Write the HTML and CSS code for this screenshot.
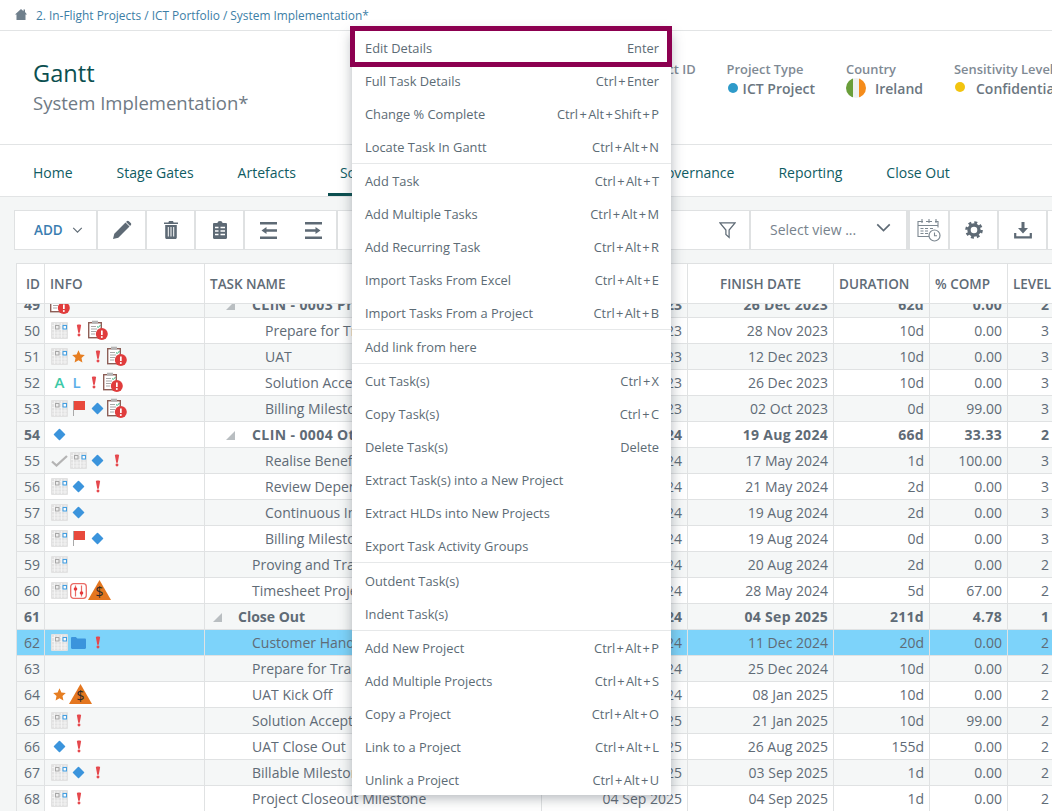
FILE: index.html
```html
<!DOCTYPE html>
<html lang="en">
<head>
<meta charset="utf-8">
<title>Gantt - System Implementation</title>
<link rel="stylesheet" href="styles.css">
</head>
<body>
<svg class="defs" width="0" height="0" aria-hidden="true">
  <symbol id="i-grid" viewBox="0 0 17 17">
    <rect width="17" height="17" rx="1" fill="#e2e2e2"/>
    <path d="M3.5 1v15M7 1v15M10.500 1v15M14 1v15M1 3.500h15M1 7.500h15M1 11h15M1 14h15" stroke="#f6f6f6" stroke-width=".8"/>
    <rect x="4.500" y="3.500" width="3.500" height="3.500" fill="#eee" stroke="#a6a6a6" stroke-width="1"/>
    <rect x="12" y="3.500" width="3.500" height="3.500" fill="#fff" stroke="#459fe0" stroke-width="1.100"/>
  </symbol>
  <symbol id="i-bang" viewBox="0 0 7 15">
    <path d="M1 1.200C1 .4 6 .4 6 1.200L4.400 10H2.600Z" fill="#e5484d"/>
    <circle cx="3.500" cy="12.800" r="1.700" fill="#e5484d"/>
  </symbol>
  <symbol id="i-star" viewBox="0 0 13 13">
    <path d="M6.500 .3l1.900 4.200 4.400.5-3.300 3 .9 4.500-3.900-2.300-3.900 2.300.9-4.500-3.300-3 4.400-.5z" fill="#e67e22"/>
  </symbol>
  <symbol id="i-flag" viewBox="0 0 12 15">
    <rect x="0" y="0" width="1" height="15" fill="#a9a9a9"/>
    <rect x="1" y="0" width="11" height="9" fill="#e8493c"/>
  </symbol>
  <symbol id="i-diamond" viewBox="0 0 13 13">
    <rect x="2.200" y="2.200" width="8.600" height="8.600" rx=".8" fill="#3b94dc" transform="rotate(45 6.500 6.500)"/>
  </symbol>
  <symbol id="i-folder" viewBox="0 0 15 12">
    <path d="M0 1.200C0 .5.500 0 1.200 0h3.600l1.600 1.600h7.400c.7 0 1.200.5 1.200 1.200v8c0 .7-.5 1.200-1.200 1.200H1.200C.5 12 0 11.500 0 10.800z" fill="#3b94dc"/>
  </symbol>
  <symbol id="i-check" viewBox="0 0 17 12">
    <path d="M1 6.500l4.500 4L16 1" fill="none" stroke="#b4b4b4" stroke-width="2.300"/>
  </symbol>
  <symbol id="i-slider" viewBox="0 0 17 16">
    <rect x=".7" y=".7" width="15.600" height="14.600" rx="3" fill="#fff" stroke="#ea6a64" stroke-width="1.300"/>
    <path d="M5.500 2.500v11M11.500 2.500v11" stroke="#ea6a64" stroke-width="1.200"/>
    <circle cx="5.500" cy="6" r="1.800" fill="#e5383b"/>
    <circle cx="11.500" cy="10" r="1.800" fill="#e5383b"/>
  </symbol>
  <symbol id="i-clip" viewBox="0 0 20 20">
    <rect x=".7" y="2.700" width="12.600" height="15" fill="#fff" stroke="#8d5f57" stroke-width="1.400"/>
    <rect x="4" y=".7" width="6" height="3" fill="#b5b5b5"/>
    <path d="M3 6.500h5M3 9h6M3 11.500h5M3 14h4" stroke="#a8a8a8" stroke-width="1"/>
    <path d="M9 6.500l1.300 1L12.500 5" fill="none" stroke="#36b37e" stroke-width="1"/>
    <circle cx="13.800" cy="14" r="6" fill="#e03c3c"/>
    <rect x="13" y="10.500" width="1.700" height="4.500" fill="#fff"/>
    <circle cx="13.800" cy="17" r="1" fill="#fff"/>
  </symbol>
  <symbol id="i-pencil" viewBox="0 0 20 20">
    <path d="M1 19l1.300-5.300L13.500 2.500l4 4L6.300 17.700zM14.700 1.300c.7-.7 1.500-.7 2.200 0l1.800 1.800c.7.700.7 1.500 0 2.200l-.6.600-4-4z" fill="#5e6a75"/>
  </symbol>
  <symbol id="i-trash" viewBox="0 0 14 18">
    <path d="M5 0h4l.6 1.500H14V3H0V1.500h4.400zM1.200 4h11.600v12.500c0 .9-.6 1.500-1.500 1.500H2.700c-.9 0-1.500-.6-1.500-1.500z" fill="#5e6a75"/>
    <path d="M4.300 6v9.500M7 6v9.500M9.700 6v9.500" stroke="#fff" stroke-width="1"/>
  </symbol>
  <symbol id="i-board" viewBox="0 0 14 18">
    <path d="M1.200 2H4.500C4.500.7 5.500 0 7 0s2.500.7 2.500 2h3.300c.7 0 1.200.5 1.200 1.200v13.600c0 .7-.5 1.200-1.200 1.200H1.200C.5 18 0 17.500 0 16.800V3.200C0 2.500.5 2 1.200 2z" fill="#5e6a75"/>
    <path d="M2 6.500h3.500M7.500 6.500H12M2 10h3.500M7.500 10H12M2 13.500h3.500M7.500 13.500H12" stroke="#fff" stroke-width="1.300"/>
  </symbol>
  <symbol id="i-outdent" viewBox="0 0 17 17">
    <path d="M0 1.200h17M6 8.500h11M0 15.800h17" stroke="#5e6a75" stroke-width="2.400"/>
    <path d="M1.500 8.500L6.500 5v7z" fill="#5e6a75"/>
  </symbol>
  <symbol id="i-indent" viewBox="0 0 17 17">
    <path d="M0 1.200h17M0 8.500h11M0 15.800h17" stroke="#5e6a75" stroke-width="2.400"/>
    <path d="M15.500 8.500L10.500 5v7z" fill="#5e6a75"/>
  </symbol>
  <symbol id="i-filter" viewBox="0 0 18 18">
    <path d="M1 1.500h16l-6.300 7.600v7.700l-3.400-3V9.100z" fill="none" stroke="#5e6a75" stroke-width="1.300"/>
  </symbol>
  <symbol id="i-cal" viewBox="0 0 24 24">
    <path d="M6 3.500H1v15h11M18 3.500h3v6M9 3.500h6" fill="none" stroke="#7d8891" stroke-width="1.100"/>
    <path d="M5 1v4M12 1v4M19 1v4M1 7.500h20M3.500 10.500h3M8 10.500h3M13 10.500h3M3.500 13h3M8 13h3M3.500 15.500h3M8 15.500h3" stroke="#7d8891" stroke-width="1.100"/>
    <circle cx="17.500" cy="17.500" r="5.500" fill="#fff" stroke="#7d8891" stroke-width="1.200"/>
    <path d="M17.500 14.500v3.300h2.500" fill="none" stroke="#7d8891" stroke-width="1.100"/>
  </symbol>
  <symbol id="i-gear" viewBox="0 0 18 18">
    <circle cx="9" cy="9" r="5" fill="none" stroke="#5e6a75" stroke-width="3.400"/>
    <circle cx="9" cy="9" r="7.500" fill="none" stroke="#5e6a75" stroke-width="2.600" stroke-dasharray="2.950 2.950"/>
  </symbol>
  <symbol id="i-down" viewBox="0 0 18 18">
    <path d="M7.500 1h3v6h3.500L9 12.500 4 7h3.500z" fill="#5e6a75"/>
    <path d="M1.200 12v4.300h15.600V12" fill="none" stroke="#5e6a75" stroke-width="2.200"/>
  </symbol>
  <symbol id="i-chev" viewBox="0 0 12 7">
    <path d="M1 1l5 5 5-5" fill="none" stroke="#5e6a75" stroke-width="1.300"/>
  </symbol>
  <symbol id="i-home" viewBox="0 0 12 11">
    <path d="M8.500 .5h1.500v2.500L12 5.500h-1.500V11H1.500V5.500H0L6 0l2.500 2.200z" fill="#6f7f8c"/>
  </symbol>
</svg>

<div class="page">
  <nav class="crumbs">
    <svg class="home"><use href="#i-home"/></svg>
    <span>2. In-Flight Projects / ICT Portfolio / System Implementation*</span>
  </nav>

  <header class="head">
    <div class="titles">
      <h1>Gantt</h1>
      <h2>System Implementation*</h2>
    </div>
    <div class="meta">
      <div class="field"><div class="lab">Project ID</div><div class="val">1042</div></div>
      <div class="field"><div class="lab">Project Type</div><div class="val"><i class="dot dot-blue"></i>ICT Project</div></div>
      <div class="field"><div class="lab">Country</div><div class="val"><i class="ireland"></i>Ireland</div></div>
      <div class="field"><div class="lab">Sensitivity Level</div><div class="val"><i class="dot dot-yellow"></i>Confidential</div></div>
    </div>
  </header>

  <ul class="tabs">
    <li>Home</li><li>Stage Gates</li><li>Artefacts</li><li class="active">Schedule</li><li>Financial</li><li>Resources</li><li>Governance</li><li>Reporting</li><li>Close Out</li>
  </ul>

  <section class="work">
    <div class="toolbar">
      <div class="tool tool-add">ADD<svg class="chev"><use href="#i-chev"/></svg></div>
      <div class="tool"><svg class="t20"><use href="#i-pencil"/></svg></div>
      <div class="tool"><svg class="t18"><use href="#i-trash"/></svg></div>
      <div class="tool"><svg class="t18"><use href="#i-board"/></svg></div>
      <div class="tool tool-two"><svg class="t17"><use href="#i-outdent"/></svg><svg class="t17"><use href="#i-indent"/></svg></div>
      <div class="tool tool-fill"><svg class="t18 filter"><use href="#i-filter"/></svg></div>
      <div class="tool tool-view"><span class="view-label">Select view ...</span><svg class="chev2"><use href="#i-chev"/></svg></div>
      <div class="tool tool-s thick"><svg class="t24"><use href="#i-cal"/></svg></div>
      <div class="tool tool-s"><svg class="t18"><use href="#i-gear"/></svg></div>
      <div class="tool tool-s"><svg class="t18"><use href="#i-down"/></svg></div>
      <div class="tool tool-s"></div>
    </div>

    <div class="grid">
      <div class="row hdr">
        <div class="c id">ID</div><div class="c info">INFO</div><div class="c task">TASK NAME</div><div class="c start">START DATE</div><div class="c finish ctr">FINISH DATE</div><div class="c dur">DURATION</div><div class="c pct">% COMP</div><div class="c lvl">LEVEL</div>
      </div>
      <div class="body">
        <div class="scroll">
          <div class="row alt bold">
            <div class="c id">49</div><div class="c info ics"><svg class="s20"><use href="#i-clip"/></svg></div><div class="c task l2g"><i class="arrow"></i>CLIN - 0003 Proving</div><div class="c start">30 Sep 2023</div><div class="c finish">26 Dec 2023</div><div class="c dur">62d</div><div class="c pct">0.00</div><div class="c lvl">2</div>
          </div>
          <div class="row">
            <div class="c id">50</div><div class="c info ics"><svg class="s19"><use href="#i-grid"/></svg><span class="slot"><svg class="bang"><use href="#i-bang"/></svg></span><svg class="s20"><use href="#i-clip"/></svg></div><div class="c task l3">Prepare for Training</div><div class="c start">15 Nov 2023</div><div class="c finish">28 Nov 2023</div><div class="c dur">10d</div><div class="c pct">0.00</div><div class="c lvl">3</div>
          </div>
          <div class="row alt">
            <div class="c id">51</div><div class="c info ics"><svg class="s19"><use href="#i-grid"/></svg><span class="slot"><svg class="star"><use href="#i-star"/></svg></span><span class="slot"><svg class="bang"><use href="#i-bang"/></svg></span><svg class="s20"><use href="#i-clip"/></svg></div><div class="c task l3">UAT</div><div class="c start">29 Nov 2023</div><div class="c finish">12 Dec 2023</div><div class="c dur">10d</div><div class="c pct">0.00</div><div class="c lvl">3</div>
          </div>
          <div class="row">
            <div class="c id">52</div><div class="c info ics"><span class="lt lt-a">A</span><span class="lt lt-l">L</span><span class="slot"><svg class="bang"><use href="#i-bang"/></svg></span><svg class="s20"><use href="#i-clip"/></svg></div><div class="c task l3">Solution Acceptance</div><div class="c start">13 Dec 2023</div><div class="c finish">26 Dec 2023</div><div class="c dur">10d</div><div class="c pct">0.00</div><div class="c lvl">3</div>
          </div>
          <div class="row alt">
            <div class="c id">53</div><div class="c info ics"><svg class="s19"><use href="#i-grid"/></svg><span class="slot"><svg class="flag"><use href="#i-flag"/></svg></span><span class="slot"><svg class="dia"><use href="#i-diamond"/></svg></span><svg class="s20"><use href="#i-clip"/></svg></div><div class="c task l3">Billing Milestone</div><div class="c start">02 Oct 2023</div><div class="c finish">02 Oct 2023</div><div class="c dur">0d</div><div class="c pct">99.00</div><div class="c lvl">3</div>
          </div>
          <div class="row bold">
            <div class="c id">54</div><div class="c info ics"><span class="slot"><svg class="dia"><use href="#i-diamond"/></svg></span></div><div class="c task l2g"><i class="arrow"></i>CLIN - 0004 Other</div><div class="c start">19 May 2024</div><div class="c finish">19 Aug 2024</div><div class="c dur">66d</div><div class="c pct">33.33</div><div class="c lvl">2</div>
          </div>
          <div class="row alt">
            <div class="c id">55</div><div class="c info ics"><span class="slot"><svg class="chk"><use href="#i-check"/></svg></span><svg class="s19"><use href="#i-grid"/></svg><span class="slot"><svg class="dia"><use href="#i-diamond"/></svg></span><span class="slot"><svg class="bang"><use href="#i-bang"/></svg></span></div><div class="c task l3">Realise Benefits</div><div class="c start">17 May 2024</div><div class="c finish">17 May 2024</div><div class="c dur">1d</div><div class="c pct">100.00</div><div class="c lvl">3</div>
          </div>
          <div class="row">
            <div class="c id">56</div><div class="c info ics"><svg class="s19"><use href="#i-grid"/></svg><span class="slot"><svg class="dia"><use href="#i-diamond"/></svg></span><span class="slot"><svg class="bang"><use href="#i-bang"/></svg></span></div><div class="c task l3">Review Dependencies</div><div class="c start">20 May 2024</div><div class="c finish">21 May 2024</div><div class="c dur">2d</div><div class="c pct">0.00</div><div class="c lvl">3</div>
          </div>
          <div class="row alt">
            <div class="c id">57</div><div class="c info ics"><svg class="s19"><use href="#i-grid"/></svg><span class="slot"><svg class="dia"><use href="#i-diamond"/></svg></span></div><div class="c task l3">Continuous Improvement</div><div class="c start">16 Aug 2024</div><div class="c finish">19 Aug 2024</div><div class="c dur">2d</div><div class="c pct">0.00</div><div class="c lvl">3</div>
          </div>
          <div class="row">
            <div class="c id">58</div><div class="c info ics"><svg class="s19"><use href="#i-grid"/></svg><span class="slot"><svg class="flag"><use href="#i-flag"/></svg></span><span class="slot"><svg class="dia"><use href="#i-diamond"/></svg></span></div><div class="c task l3">Billing Milestone</div><div class="c start">19 Aug 2024</div><div class="c finish">19 Aug 2024</div><div class="c dur">0d</div><div class="c pct">0.00</div><div class="c lvl">3</div>
          </div>
          <div class="row alt">
            <div class="c id">59</div><div class="c info ics"><svg class="s19"><use href="#i-grid"/></svg></div><div class="c task l2">Proving and Training</div><div class="c start">19 Aug 2024</div><div class="c finish">20 Aug 2024</div><div class="c dur">2d</div><div class="c pct">0.00</div><div class="c lvl">2</div>
          </div>
          <div class="row">
            <div class="c id">60</div><div class="c info ics"><svg class="s19"><use href="#i-grid"/></svg><svg class="sl"><use href="#i-slider"/></svg><span class="warn">$</span></div><div class="c task l2">Timesheet Project</div><div class="c start">22 May 2024</div><div class="c finish">28 May 2024</div><div class="c dur">5d</div><div class="c pct">67.00</div><div class="c lvl">2</div>
          </div>
          <div class="row alt bold">
            <div class="c id">61</div><div class="c info ics"></div><div class="c task l1g"><i class="arrow"></i>Close Out</div><div class="c start">14 Nov 2024</div><div class="c finish">04 Sep 2025</div><div class="c dur">211d</div><div class="c pct">4.78</div><div class="c lvl">1</div>
          </div>
          <div class="row sel">
            <div class="c id">62</div><div class="c info ics"><svg class="s19"><use href="#i-grid"/></svg><span class="slot"><svg class="fold"><use href="#i-folder"/></svg></span><span class="slot"><svg class="bang"><use href="#i-bang"/></svg></span></div><div class="c task l2">Customer Handover</div><div class="c start">14 Nov 2024</div><div class="c finish">11 Dec 2024</div><div class="c dur">20d</div><div class="c pct">0.00</div><div class="c lvl">2</div>
          </div>
          <div class="row alt">
            <div class="c id">63</div><div class="c info ics"></div><div class="c task l2">Prepare for Transition</div><div class="c start">12 Dec 2024</div><div class="c finish">25 Dec 2024</div><div class="c dur">10d</div><div class="c pct">0.00</div><div class="c lvl">2</div>
          </div>
          <div class="row">
            <div class="c id">64</div><div class="c info ics"><span class="slot"><svg class="star"><use href="#i-star"/></svg></span><span class="warn warn-b">$</span></div><div class="c task l2">UAT Kick Off</div><div class="c start">26 Dec 2024</div><div class="c finish">08 Jan 2025</div><div class="c dur">10d</div><div class="c pct">0.00</div><div class="c lvl">2</div>
          </div>
          <div class="row alt">
            <div class="c id">65</div><div class="c info ics"><svg class="s19"><use href="#i-grid"/></svg><span class="slot"><svg class="bang"><use href="#i-bang"/></svg></span></div><div class="c task l2">Solution Acceptance</div><div class="c start">08 Jan 2025</div><div class="c finish">21 Jan 2025</div><div class="c dur">10d</div><div class="c pct">99.00</div><div class="c lvl">2</div>
          </div>
          <div class="row">
            <div class="c id">66</div><div class="c info ics"><span class="slot"><svg class="dia"><use href="#i-diamond"/></svg></span><span class="slot"><svg class="bang"><use href="#i-bang"/></svg></span></div><div class="c task l2">UAT Close Out</div><div class="c start">22 Jan 2025</div><div class="c finish">26 Aug 2025</div><div class="c dur">155d</div><div class="c pct">0.00</div><div class="c lvl">2</div>
          </div>
          <div class="row alt">
            <div class="c id">67</div><div class="c info ics"><svg class="s19"><use href="#i-grid"/></svg><span class="slot"><svg class="dia"><use href="#i-diamond"/></svg></span><span class="slot"><svg class="bang"><use href="#i-bang"/></svg></span></div><div class="c task l2">Billable Milestone</div><div class="c start">03 Sep 2025</div><div class="c finish">03 Sep 2025</div><div class="c dur">1d</div><div class="c pct">0.00</div><div class="c lvl">2</div>
          </div>
          <div class="row">
            <div class="c id">68</div><div class="c info ics"><svg class="s19"><use href="#i-grid"/></svg><span class="slot"><svg class="bang"><use href="#i-bang"/></svg></span></div><div class="c task l2">Project Closeout Milestone</div><div class="c start">04 Sep 2025</div><div class="c finish">04 Sep 2025</div><div class="c dur">1d</div><div class="c pct">0.00</div><div class="c lvl">2</div>
          </div>
        </div>
      </div>
    </div>
  </section>

  <div class="menu">
    <div class="callout"></div>
    <ul class="group">
      <li>Edit Details<kbd>Enter</kbd></li>
      <li>Full Task Details<kbd>Ctrl<span class="p">+</span>Enter</kbd></li>
      <li>Change % Complete<kbd>Ctrl<span class="p">+</span>Alt<span class="p">+</span>Shift<span class="p">+</span>P</kbd></li>
      <li>Locate Task In Gantt<kbd>Ctrl<span class="p">+</span>Alt<span class="p">+</span>N</kbd></li>
    </ul>
    <ul class="group">
      <li>Add Task<kbd>Ctrl<span class="p">+</span>Alt<span class="p">+</span>T</kbd></li>
      <li>Add Multiple Tasks<kbd>Ctrl<span class="p">+</span>Alt<span class="p">+</span>M</kbd></li>
      <li>Add Recurring Task<kbd>Ctrl<span class="p">+</span>Alt<span class="p">+</span>R</kbd></li>
      <li>Import Tasks From Excel<kbd>Ctrl<span class="p">+</span>Alt<span class="p">+</span>E</kbd></li>
      <li>Import Tasks From a Project<kbd>Ctrl<span class="p">+</span>Alt<span class="p">+</span>B</kbd></li>
    </ul>
    <ul class="group">
      <li>Add link from here</li>
    </ul>
    <ul class="group">
      <li>Cut Task(s)<kbd>Ctrl<span class="p">+</span>X</kbd></li>
      <li>Copy Task(s)<kbd>Ctrl<span class="p">+</span>C</kbd></li>
      <li>Delete Task(s)<kbd>Delete</kbd></li>
      <li>Extract Task(s) into a New Project</li>
      <li>Extract HLDs into New Projects</li>
      <li>Export Task Activity Groups</li>
    </ul>
    <ul class="group group-gap">
      <li>Outdent Task(s)</li>
      <li>Indent Task(s)</li>
    </ul>
    <ul class="group group-last">
      <li>Add New Project<kbd>Ctrl<span class="p">+</span>Alt<span class="p">+</span>P</kbd></li>
      <li>Add Multiple Projects<kbd>Ctrl<span class="p">+</span>Alt<span class="p">+</span>S</kbd></li>
      <li>Copy a Project<kbd>Ctrl<span class="p">+</span>Alt<span class="p">+</span>O</kbd></li>
      <li>Link to a Project<kbd>Ctrl<span class="p">+</span>Alt<span class="p">+</span>L</kbd></li>
      <li>Unlink a Project<kbd>Ctrl<span class="p">+</span>Alt<span class="p">+</span>U</kbd></li>
    </ul>
  </div>
</div>
</body>
</html>
```

FILE: styles.css
```css
* { box-sizing: border-box; }
html, body { margin: 0; padding: 0; height: 100%; overflow: hidden; background: #fff; }
body { font-family: "Open Sans", "Noto Sans", sans-serif; color: #5f6b76; }
.defs { position: absolute; }
.page { position: relative; width: 1052px; height: 811px; overflow: hidden; }

/* breadcrumb */
.crumbs { height: 31px; display: flex; align-items: center; padding: 0 0 1px 15px; border-bottom: 1px solid #e2e4e5; font-size: 11.9px; color: #3c7ea6; }
.home { width: 12px; height: 11px; margin-right: 9px; }

/* header */
.head { height: 114px; display: flex; border-bottom: 1px solid #e2e4e5; }
.titles { flex: 0 0 635px; padding: 26px 0 0 33px; }
h1 { margin: 0; font-size: 23.6px; font-weight: 400; line-height: 32px; color: #0b4f50; }
h2 { margin: 0; font-size: 18.5px; font-weight: 400; line-height: 27px; color: #6f7a85; }
.meta { display: flex; gap: 31px; padding-top: 29px; white-space: nowrap; flex: none; }
.lab { font-size: 12.9px; font-weight: 600; line-height: 18px; color: #7f8a94; }
.val { display: flex; align-items: center; height: 20px; font-size: 14px; font-weight: 600; color: #6b7680; }
.dot { display: block; width: 10px; height: 10px; border-radius: 50%; margin: 0 5px 0 1px; }
.dot-blue { background: #2e9ac9; }
.dot-yellow { background: #f2c40f; margin: -3px 11px 0 1px; }
.ireland { display: block; width: 20px; height: 20px; border-radius: 50%; margin-right: 9px; background: linear-gradient(90deg, #6a9e3a 0 33%, #eef0f0 33% 66%, #f58c1b 66%); }

/* tabs */
.tabs { list-style: none; margin: 0; height: 52px; padding: 0 0 0 33px; display: flex; gap: 44px; border-bottom: 1px solid #e2e4e5; font-size: 14px; color: #0f5c63; }
.tabs li { line-height: 56px; height: 51px; position: relative; }
.tabs .active::after { content: ""; position: absolute; left: -12px; right: -12px; bottom: 0; height: 3px; background: #0b4f50; }

/* work area */
.work { height: 614px; background: #f4f6f6; padding: 13px 0 0 16px; }
.toolbar { display: flex; height: 40px; margin: 0 0 13px -2px; width: 1050px; background: #fff; border: 1px solid #dfe1e2; font-size: 14px; }
.tool { display: flex; align-items: center; justify-content: center; flex: none; width: 49px; border-right: 2px solid #dfe1e2; }
.tool-add { width: 83px; justify-content: flex-start; padding-left: 19px; color: #3a7db0; font-weight: 600; font-size: 13.5px; }
.chev { width: 11px; height: 6px; margin-left: 9px; }
.tool-two { width: 93px; gap: 28px; }
.tool-fill { width: 413px; justify-content: flex-end; padding-right: 13px; }
.tool-view { width: 157px; justify-content: flex-start; padding-left: 19px; color: #77828c; font-weight: 400; }
.view-label { margin-top: -2px; }
.chev2 { width: 15px; height: 9px; margin-left: 20px; margin-top: -5px; }
.tool-s { width: 49px; }
.tool-s:last-child { border-right: 0; }
.thick { width: 42px; border-left: 2px solid #dfe1e2; }
.t17 { width: 17px; height: 17px; }
.t18 { width: 18px; height: 18px; }
.t20 { width: 20px; height: 20px; }
.t24 { width: 24px; height: 24px; }
.filter { width: 17px; height: 18px; }

/* grid */
.grid { width: 1040px; background: #fff; border-top: 1px solid #dfe1e2; border-left: 1px solid #dfe1e2; }
.row { display: flex; height: 26px; font-size: 14px; line-height: 25px; white-space: nowrap; }
.hdr { height: 40px; line-height: 41px; font-weight: 600; font-size: 13.5px; background: #fff; }
.body { height: 508px; overflow: hidden; }
.scroll { margin-top: -12px; }
.alt { background: #f5f7f7; }
.sel { background: #7dd3fa; }
.bold { font-weight: 700; }
.bold .finish, .bold .dur, .bold .pct { letter-spacing: .3px; }
.c { flex: none; overflow: hidden; padding: 0 5px; border-right: 1px solid #e0e2e3; border-bottom: 1px solid #e0e2e3; text-align: right; }
.id { width: 28px; padding-right: 4px; background: #f5f7f7; }
.sel .id { background: #7dd3fa; }
.info { width: 160px; text-align: left; }
.task { width: 337px; text-align: left; }
.start { width: 146px; }
.finish { width: 146px; }
.dur { width: 96px; }
.pct { width: 78px; }
.lvl { width: 46px; border-right: 0; }
.hdr .c { text-align: left; }
.hdr .c.id { text-align: right; background: #fff; }
.hdr .ctr, .hdr .start { text-align: center; }

.l1g { padding-left: 8px; }
.l1g .arrow { margin-right: 16px; }
.l2g { padding-left: 21px; letter-spacing: .4px; }
.l2 { padding-left: 47px; }
.l3 { padding-left: 60px; }
.arrow { display: inline-block; width: 9px; height: 9px; margin-right: 17px; background: #b9bec1; clip-path: polygon(100% 0, 100% 100%, 0 100%); }

/* info icons */
.ics { display: flex; align-items: center; padding: 0 0 0 5px; }
.ics svg { flex: none; }
.slot { flex: none; width: 19px; display: flex; justify-content: center; align-items: center; }
.s19 { width: 17px; height: 17px; margin: 0 1px; }
.s20 { width: 20px; height: 20px; margin-top: -2px; }
.bang { width: 6px; height: 15px; }
.star { width: 13px; height: 13px; }
.flag { width: 12px; height: 15px; }
.dia { width: 13px; height: 13px; }
.fold { width: 15px; height: 12px; }
.chk { width: 17px; height: 12px; }
.sl { width: 17px; height: 16px; margin-left: 1px; }
.lt { flex: none; font-weight: 600; font-size: 15px; text-align: center; }
.lt-a { width: 19px; color: #3cc9a7; }
.lt-l { width: 15px; color: #5aaee8; }
.warn { flex: none; width: 23px; height: 20px; margin-left: 1px; margin-top: -1px; background: #e4761f; clip-path: polygon(50% 0, 100% 100%, 0 100%); color: #2c2a28; font-size: 14px; font-weight: 400; line-height: 24px; text-align: center; }
.warn-b { margin-left: 0; }

/* context menu */
.menu { position: absolute; left: 352px; top: 31px; width: 319px; background: #fff; box-shadow: 0 3px 12px rgba(60, 70, 80, .4); font-size: 12.85px; color: #5c6b75; }
.callout { position: absolute; left: -2px; top: -5px; width: 322px; height: 41px; border: 5px solid #8c0050; }
.group { list-style: none; margin: 0; padding: 0; border-bottom: 1px solid #e6e8e9; }
.group-last { border-bottom: 0; margin-bottom: -1px; }
.group-gap { padding-top: 1px; }
.group li { display: flex; justify-content: space-between; align-items: center; height: 33px; padding: 0 12px 0 13px; }
kbd { font: inherit; }
.p { margin: 0 1.35px; }
```
